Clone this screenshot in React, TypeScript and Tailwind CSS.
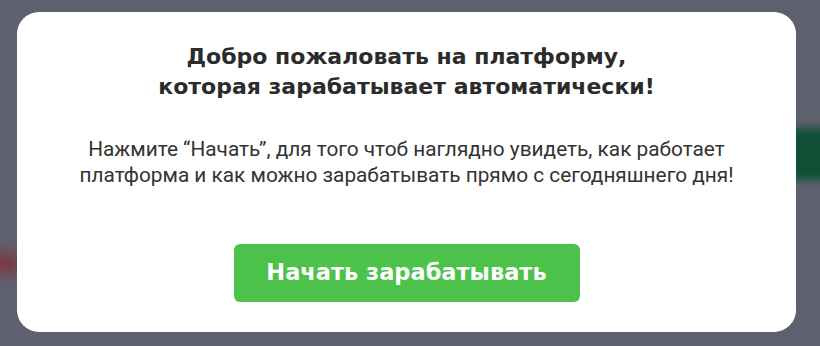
export default function App() {
  return (
    <div className="relative w-[820px] h-[346px] overflow-hidden bg-[#5f606d]">
      <div className="absolute left-[-20px] top-[252px] w-[40px] h-[22px] rounded-full bg-[#7a3a48] blur-[6px]" />
      <div className="absolute right-[-10px] top-[128px] w-[40px] h-[52px] bg-[#0f4f36] blur-[4px]" />
      <div className="relative pt-[12px] pl-[17px]">
        <div className="w-[779px] h-[320px] bg-white rounded-[22px] flex flex-col items-center">
          <h1 className="mt-[30px] text-center text-[22px] leading-[30px] font-bold text-[#2b2b2b] [font-family:'DejaVu_Sans',sans-serif]">
            Добро пожаловать на платформу,
            <br />
            которая зарабатывает автоматически!
          </h1>
          <p className="mt-[34px] text-center text-[20.8px] leading-[26px] text-[#333333] [font-family:Roboto,sans-serif]">
            Нажмите “Начать”, для того чтоб наглядно увидеть, как работает
            <br />
            платформа и как можно зарабатывать прямо с сегодняшнего дня!
          </p>
          <button className="mt-[56px] w-[346px] h-[58px] rounded-[6px] bg-[#4cc24a] text-white text-[22.5px] font-bold [font-family:'DejaVu_Sans',sans-serif]">
            Начать зарабатывать
          </button>
        </div>
      </div>
    </div>
  );
}
